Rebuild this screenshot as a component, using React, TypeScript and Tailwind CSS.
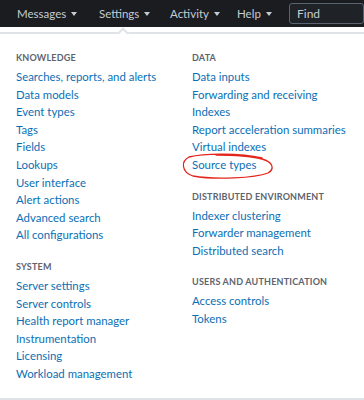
const knowledge = [
  'Searches, reports, and alerts',
  'Data models',
  'Event types',
  'Tags',
  'Fields',
  'Lookups',
  'User interface',
  'Alert actions',
  'Advanced search',
  'All configurations',
];
const system = [
  'Server settings',
  'Server controls',
  'Health report manager',
  'Instrumentation',
  'Licensing',
  'Workload management',
];
const data = [
  'Data inputs',
  'Forwarding and receiving',
  'Indexes',
  'Report acceleration summaries',
  'Virtual indexes',
  'Source types',
];
const distributed = ['Indexer clustering', 'Forwarder management', 'Distributed search'];
const users = ['Access controls', 'Tokens'];

const Caret = () => (
  <svg width="6" height="4" viewBox="0 0 6 4" className="shrink-0">
    <path d="M0 0 L6 0 L3 4 Z" fill="#c3cbd4" />
  </svg>
);

const NavItem = ({ label, width }: { label: string; width: string }) => (
  <div className={`flex items-center gap-[5px] ${width}`}>
    <span>{label}</span>
    <Caret />
  </div>
);

const Section = ({ title, items }: { title: string; items: string[] }) => (
  <div>
    <div className="text-[9px] font-bold leading-[14px] tracking-[0.2px] text-[#5c6470] mb-[3px]">{title}</div>
    {items.map((item) => (
      <a key={item} href="#" className="block text-[11.4px] leading-[17.6px] text-[#0b6fb5] whitespace-nowrap">
        {item}
      </a>
    ))}
  </div>
);

const App = () => {
  return (
    <div className="relative w-[364px] h-[400px] bg-white overflow-hidden" style={{ fontFamily: 'Lato, "Open Sans", sans-serif' }}>
      {/* Top nav bar */}
      <div className="h-[27px] bg-[#1a1c20] flex items-center pl-[17px] text-[11.5px] text-[#c3cbd4]">
        <NavItem label="Messages" width="w-[82px]" />
        <NavItem label="Settings" width="w-[71px]" />
        <NavItem label="Activity" width="w-[67px]" />
        <NavItem label="Help" width="w-[52px]" />
        <div className="h-[21px] flex-1 border border-[#5c6370] rounded-[3px] bg-[#1f2227] flex items-center pl-[7px] text-[12px] text-[#c3cbd4]">
          Find
        </div>
      </div>

      {/* Dropdown panel */}
      <div className="relative mt-[5px] h-[368px] border-t-2 border-b-2 border-[#dfe3e8]">
        <div className="absolute left-[119px] top-[-5px] w-[8px] h-[8px] rotate-45 bg-white border-t-2 border-l-2 border-[#dfe3e8]" />
        <div className="grid grid-cols-[176px_1fr] pl-[16px] pt-[17px]">
          <div className="flex flex-col gap-[16px]">
            <Section title="KNOWLEDGE" items={knowledge} />
            <Section title="SYSTEM" items={system} />
          </div>
          <div className="flex flex-col gap-[16px]">
            <Section title="DATA" items={data} />
            <Section title="DISTRIBUTED ENVIRONMENT" items={distributed} />
            <Section title="USERS AND AUTHENTICATION" items={users} />
          </div>
        </div>
      </div>

      {/* Red annotation around "Source types" */}
      <svg className="absolute left-0 top-0 pointer-events-none" width="364" height="400">
        <path
          d="M262 158 C240 153, 205 153, 189 157 C181 161, 181 172, 193 176 C215 180, 255 178, 268 173 C275 169, 273 162, 262 159 C250 156, 228 155, 216 155"
          fill="none"
          stroke="#e3261c"
          strokeWidth="1.3"
          strokeLinecap="round"
        />
      </svg>
    </div>
  );
};

export default App;
